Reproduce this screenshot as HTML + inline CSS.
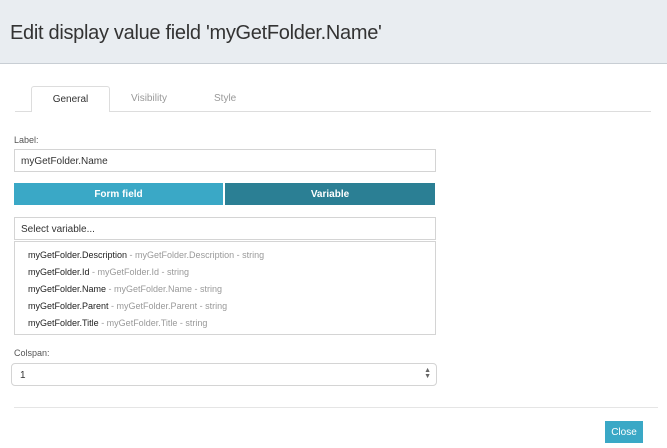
<!DOCTYPE html><html><head><style>
body{margin:0;width:667px;height:448px;background:#fff;font-family:"Liberation Sans",sans-serif;position:relative;overflow:hidden;color:#333}
.a{position:absolute}
.hd{left:0;top:0;width:667px;height:63px;background:#e9edf1;border-bottom:1px solid #c8ced4}
.box{border:1px solid #d4d4d4;box-sizing:border-box;font-size:10px}
</style></head><body>
<div class="a hd"></div>
<div class="a" style="left:10px;top:22px;font-size:20px;color:#333;letter-spacing:-0.3px">Edit display value field 'myGetFolder.Name'</div>
<div class="a" style="left:15px;top:111px;width:636px;height:1px;background:#ddd"></div>
<div class="a" style="left:31px;top:86px;width:79px;height:26px;border:1px solid #ddd;border-bottom:none;background:#fff;border-radius:3px 3px 0 0;box-sizing:border-box;font-size:10px;text-align:center;line-height:25px;color:#333">General</div>
<div class="a" style="left:131px;top:92px;font-size:10px;color:#999;line-height:14px">Visibility</div>
<div class="a" style="left:214px;top:92px;font-size:10px;color:#999;line-height:14px">Style</div>
<div class="a" style="left:14px;top:135px;font-size:9px;color:#555">Label:</div>
<div class="a box" style="left:14px;top:149px;width:422px;height:23px;padding:5px 6px;line-height:13px">myGetFolder.Name</div>
<div class="a" style="left:14px;top:183px;width:209px;height:22px;background:#3aa8c6;color:#fff;font-size:10px;font-weight:bold;text-align:center;line-height:23px">Form field</div>
<div class="a" style="left:225px;top:183px;width:210px;height:22px;background:#2b7f94;color:#fff;font-size:10px;font-weight:bold;text-align:center;line-height:23px">Variable</div>
<div class="a box" style="left:14px;top:217px;width:422px;height:23px;padding:5px 6px;line-height:13px">Select variable...</div>
<div class="a box" style="left:14px;top:241px;width:422px;height:94px;padding:5px 13px;font-size:9px;line-height:17px;color:#222">
<div>myGetFolder.Description <span style="color:#999">- myGetFolder.Description - string</span></div>
<div>myGetFolder.Id <span style="color:#999">- myGetFolder.Id - string</span></div>
<div>myGetFolder.Name <span style="color:#999">- myGetFolder.Name - string</span></div>
<div>myGetFolder.Parent <span style="color:#999">- myGetFolder.Parent - string</span></div>
<div>myGetFolder.Title <span style="color:#999">- myGetFolder.Title - string</span></div>
</div>
<div class="a" style="left:14px;top:348px;font-size:9px;color:#555">Colspan:</div>
<div class="a box" style="left:11px;top:363px;width:426px;height:23px;border-radius:4px;padding:5px 8px;line-height:13px">1<span style="position:absolute;right:5px;top:4px;font-size:7px;line-height:6px;color:#666">▲<br>▼</span></div>
<div class="a" style="left:14px;top:407px;width:644px;height:1px;background:#e5e5e5"></div>
<div class="a" style="left:605px;top:421px;width:38px;height:22px;background:#3aa8c6;color:#fff;font-size:10px;text-align:center;line-height:23px">Close</div>
</body></html>
